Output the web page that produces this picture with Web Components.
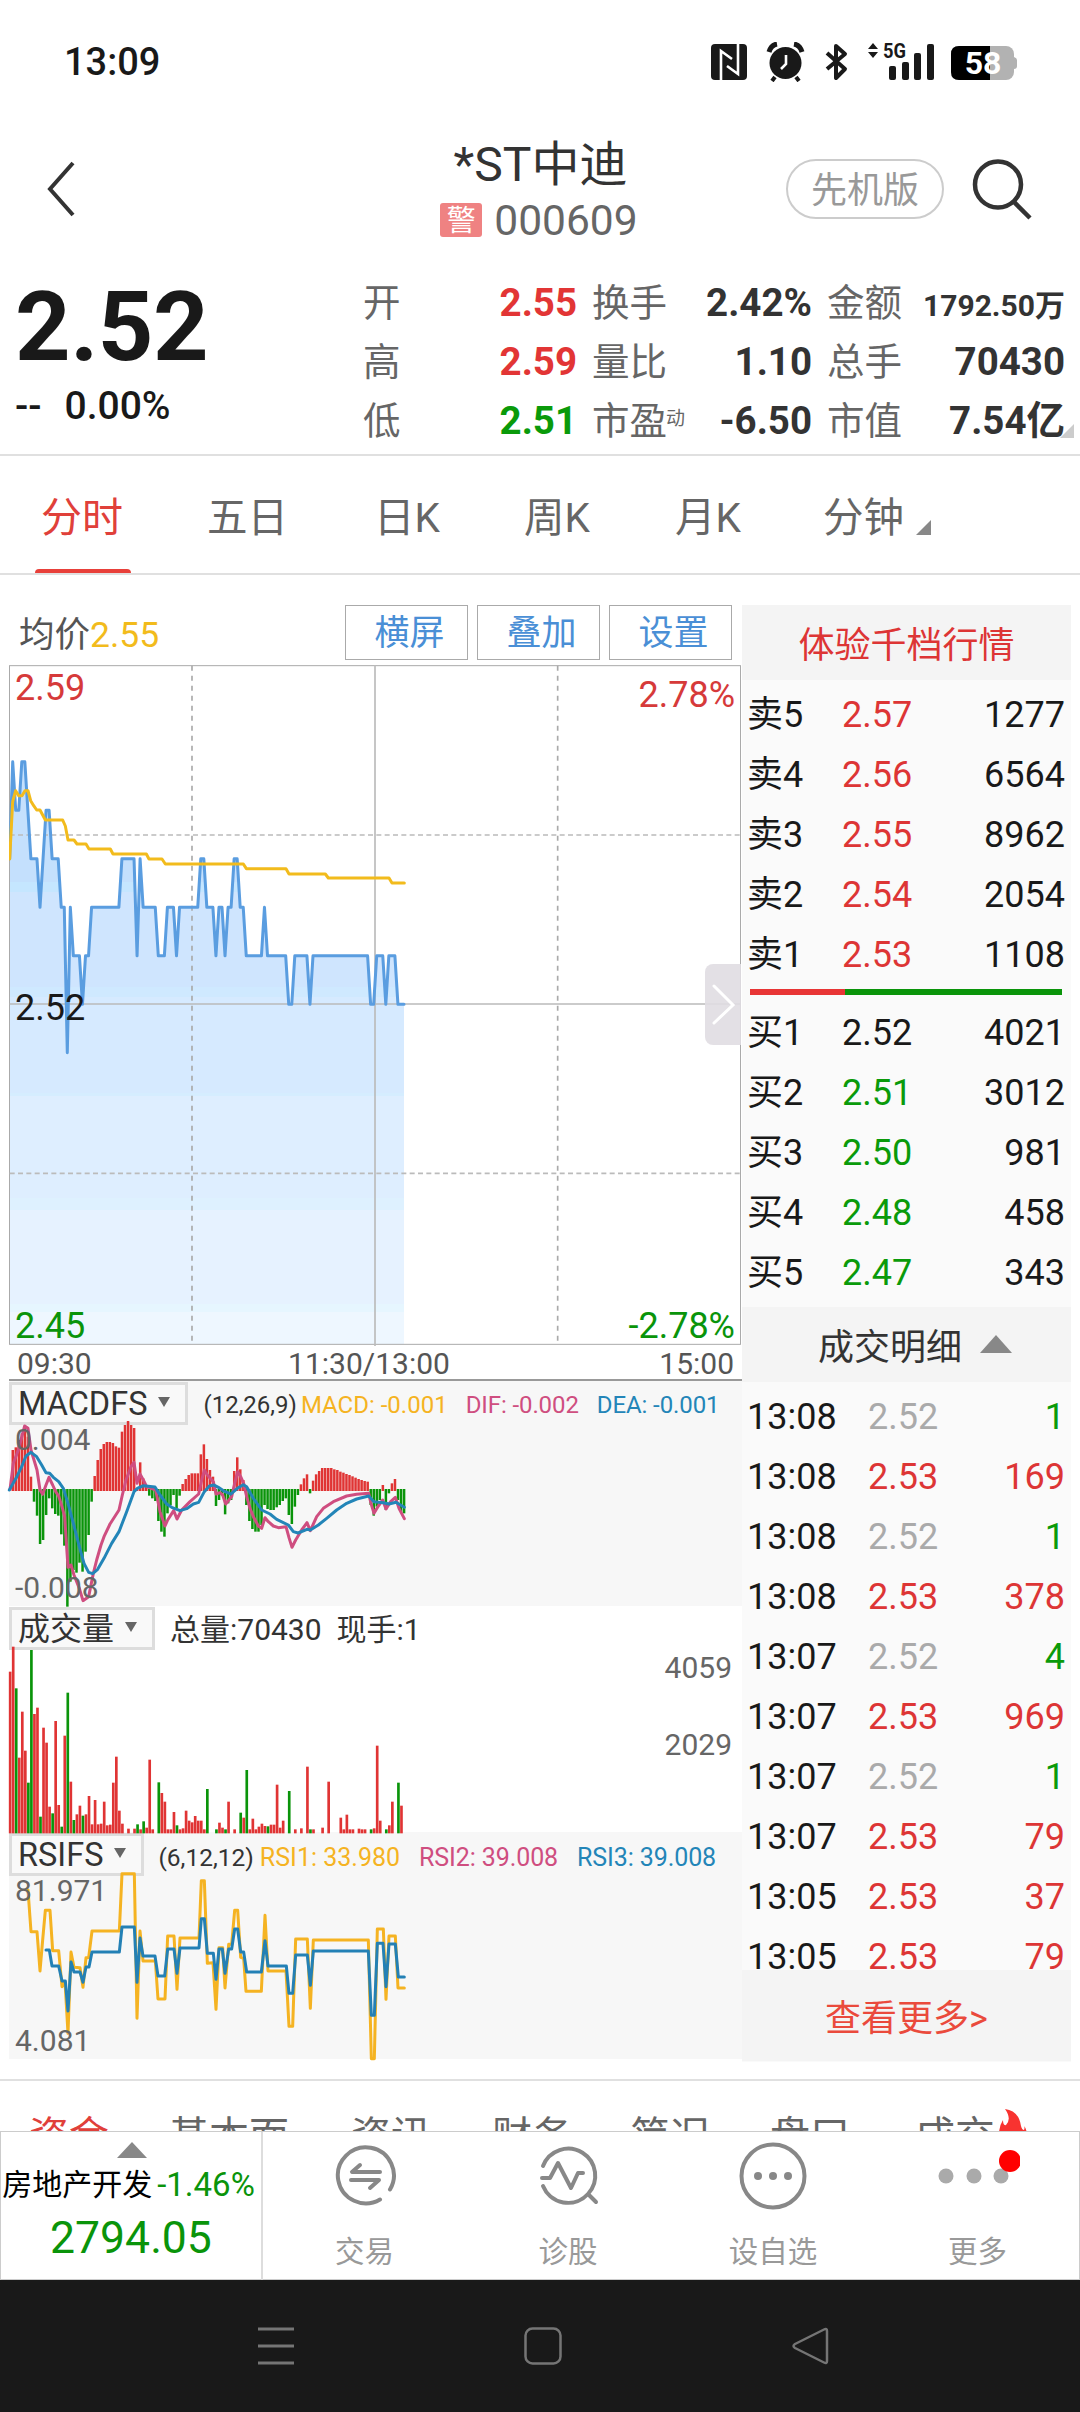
<!DOCTYPE html>
<html lang="zh-CN">
<head>
<meta charset="utf-8">
<title>*ST中迪 000609</title>
<style>
    :root {
        --up: #dd3535;
        --down: #0a940a;
        --line: #e0e0e0;
        --ink: #191919;
    }
    body {
        margin: 0;
        width: 1080px;
        height: 2412px;
        overflow: hidden;
        background: #fff;
        color: var(--ink);
        font-family: Roboto, "Noto Sans CJK SC", sans-serif;
    }
</style>
</head>
<body>
<stock-page></stock-page>

<script>
// registers an element whose shadow root is just styles + markup
function define(name, html, setup) {
    customElements.define(name, class extends HTMLElement {
        constructor() {
            super();
            this.attachShadow({ mode: 'open' });
        }
        connectedCallback() {
            this.shadowRoot.innerHTML = html;
            if (setup) setup(this, this.shadowRoot);
        }
    });
}

/* ---------- status bar ---------- */
define('status-bar', `
    <style>
        :host { display: flex; align-items: center; justify-content: space-between; height: 124px; padding: 0 60px 0 64px; box-sizing: border-box; }
        .clock { font-size: 38px; font-weight: 500; line-height: 125px; }
        svg { display: block; width: 310px; height: 40px; }
    </style>
    <span class="clock">13:09</span>
    <svg viewBox="710 42 310 40" fill="#191919">
        <rect x="711" y="44" width="36" height="36" rx="4"/>
        <path d="M721 80V51l11 8M738 44V74l-11 -8" fill="none" stroke="#fff" stroke-width="2.6"/>
        <circle cx="785.500" cy="63" r="16"/>
        <path d="M769 52q2-7 8-8M802 52q-2-7-8-8" fill="none" stroke="#191919" stroke-width="5"/>
        <path d="M775 77l-3 4M796 77l3 4" stroke="#191919" stroke-width="4"/>
        <path d="M786 55v9l-5 5" fill="none" stroke="#fff" stroke-width="2.600"/>
        <path d="M827 53l18 16-9 9V46l9 8-18 15" fill="none" stroke="#191919" stroke-width="4" stroke-linejoin="round"/>
        <path d="M868 49l5-6 5 6zM868 52l5 6 5-6z"/>
        <text x="883" y="58" font-size="21" font-weight="700" textLength="23" lengthAdjust="spacingAndGlyphs" font-family="Roboto">5G</text>
        <rect x="889" y="66" width="7" height="14" rx="2"/>
        <rect x="902" y="62" width="7" height="18" rx="2"/>
        <rect x="914" y="53" width="7" height="27" rx="2"/>
        <rect x="927" y="44" width="7" height="36" rx="2"/>
        <rect x="951" y="46" width="63" height="34" rx="8" fill="#b2b2b2"/>
        <path d="M1014 57q3 1 3 3v6q0 3-3 3z" fill="#b2b2b2"/>
        <path d="M990 46h-31q-8 0-8 8v18q0 8 8 8h31z" fill="#000"/>
        <text x="983" y="74" font-size="32" font-weight="700" fill="#fff" text-anchor="middle" font-family="Roboto">58</text>
    </svg>
`);

/* ---------- title row ---------- */
define('stock-header', `
    <style>
        :host { display: grid; grid-template-columns: 1fr auto 1fr; align-items: center; height: 130px; padding: 0 47px 0 45px; box-sizing: border-box; }
        .back, .find { display: block; }
        .titles { align-self: start; padding-top: 16px; text-align: center; color: #333; }
        .name { font-size: 48px; line-height: 50px; margin-left: 3px; }
        .code { display: flex; align-items: center; justify-content: center; gap: 12px; height: 60px; font-size: 42.500px; color: #666; }
        .badge { width: 42px; height: 34px; border-radius: 3px; background: #ef8282; color: #fff; font-size: 29px; line-height: 36px; text-align: center; }
        .tools { display: flex; justify-content: flex-end; align-items: center; gap: 28px; }
        .pill { box-sizing: border-box; width: 158px; height: 60px; border: 2px solid #ccc; border-radius: 30px; color: #999; font-size: 36px; line-height: 60px; text-align: center; }
    </style>
    <svg class="back" width="32" height="56" viewBox="0 0 32 56"><path d="M28 2L5 28 28 54" fill="none" stroke="#333" stroke-width="4"/></svg>
    <div class="titles">
        <div class="name"><slot name="name"></slot></div>
        <div class="code"><span class="badge">警</span><slot name="code"></slot></div>
    </div>
    <div class="tools">
        <span class="pill">先机版</span>
        <svg class="find" width="61" height="62" viewBox="972 158 61 62" fill="none" stroke="#333"><circle cx="998" cy="184.500" r="23" stroke-width="4.500"/><path d="M1014 202l16 16" stroke-width="4.500"/></svg>
    </div>
`);

/* ---------- last price and day figures ---------- */
define('stat-item', `
    <style>
        :host { display: flex; justify-content: space-between; align-items: flex-start; height: 59px; font-size: 38.500px; color: #666; }
        .label { display: flex; font-size: 37.500px; line-height: 63px; }
        sup { font-size: 19px; line-height: 57px; vertical-align: baseline; margin-left: -1px; }
        .value { font-weight: 700; color: #333; line-height: 62px; }
        :host([up]) .value { color: #e23535; }
        :host([down]) .value { color: #0a9a0a; }
        :host([small]) .value { font-size: 30px; line-height: 67px; }
    </style>
    <span class="label"><span class="t"></span></span>
    <span class="value"><slot></slot></span>
`, (el, root) => {
    root.querySelector('.t').textContent = el.getAttribute('label');
    if (el.hasAttribute('note')) {
        const sup = document.createElement('sup');
        sup.textContent = el.getAttribute('note');
        root.querySelector('.label').appendChild(sup);
    }
});

define('quote-board', `
    <style>
        :host { display: grid; grid-template-columns: 348px 702px; height: 202px; padding: 18px 15px 0; box-sizing: border-box; border-bottom: 2px solid var(--line); position: relative; }
        .last { font-size: 97px; font-weight: 700; line-height: 97px; margin-top: 7px; letter-spacing: -.5px; }
        .change { font-size: 39px; font-weight: 500; line-height: 61px; display: flex; gap: 23px; }
        .stats { display: grid; grid-template-columns: 214px 220px 238px; column-gap: 15px; align-content: start; }
        .corner { position: absolute; right: 6px; bottom: 16px; }
    </style>
    <div><div class="last">2.52</div><div class="change"><span>--</span><span>0.00%</span></div></div>
    <div class="stats">
        <stat-item label="开" up>2.55</stat-item><stat-item label="换手">2.42%</stat-item><stat-item label="金额" small>1792.50万</stat-item>
        <stat-item label="高" up>2.59</stat-item><stat-item label="量比">1.10</stat-item><stat-item label="总手">70430</stat-item>
        <stat-item label="低" down>2.51</stat-item><stat-item label="市盈" note="动">-6.50</stat-item><stat-item label="市值">7.54亿</stat-item>
    </div>
    <svg class="corner" width="14" height="14"><path d="M14 0V14H0z" fill="#ccc"/></svg>
`);

/* ---------- period tabs ---------- */
define('period-tabs', `
    <style>
        :host { display: grid; grid-template-rows: 100%; grid-template-columns: 166px 167px 150px 151px 148px auto; height: 119px; padding-left: 41px; box-sizing: border-box; border-bottom: 2px solid var(--line); color: #666; font-size: 41px; }
        span { line-height: 125px; font-size: 40.500px; }
        .on { color: #e0403a; font-size: 41px; width: 83px; position: relative; }
        .on::after { content: ""; position: absolute; left: -6px; bottom: 0; width: 96px; height: 4px; border-radius: 4px 4px 0 0; background: #e8403a; }
        svg { margin-left: 12px; vertical-align: -3px; }
    </style>
    <span class="on">分时</span><span>五日</span><span>日K</span><span>周K</span><span>月K</span>
    <span>分钟<svg width="15" height="15"><path d="M15 0V15H0z" fill="#888"/></svg></span>
`);

/* ---------- intraday chart ---------- */
// the plots use 3 units per pixel; one minute is 9.1 units wide
const X0 = 29, STEP = 9.1;

// "level*minutes": cents above 2.52
const PRICE = '3 5 4*2 5*2 4 3*3 2 3 4*2 3*3 2*2 -1 2 1*3 0 1*2 2*10 3*5 1 3 2*5 1*3 2*3 1 2*7 3*2 2*3 1 2*2 1 2*2 3*2 2*2 1*6 2 1*7 0*2 1*5 0 1*19 0*2 1*3 0 1*3 0*3';
const AVERAGE = '29,807 38,635 47,602 56,617 66,617 75,602 84,602 92,632 101,647 110,660 120,660 136,690 188,690 196,708 204,750 222,750 231,762 258,762 267,777 331,777 339,792 439,792 447,807 486,807 496,822 730,822 739,836 858,836 867,852 976,852 985,864 1167,864 1176,879 1213,879';

function pricePoints() {
    const levels = [];
    PRICE.split(' ').forEach(part => {
        const [level, count] = part.split('*').map(Number);
        for (let i = 0; i < (count || 1); i++) levels.push(level);
    });
    return levels.map((l, i) => (X0 + i * STEP).toFixed(1) + ',' + (1243 - l * 145.5)).join(' ');
}

define('minute-chart', `
    <style>
        :host { display: block; }
        .bar { display: flex; align-items: flex-start; gap: 9px; height: 60px; padding: 0 10px 0 10px; font-size: 36px; }
        .avg { flex: 1; line-height: 60px; color: #555; font-size: 35.500px; }
        .avg b { font-weight: 400; color: #f2bb1c; }
        .btn { box-sizing: border-box; width: 123px; height: 55px; border: 1.5px solid #aaa; padding-left: 6px; text-align: center; font-size: 35px; line-height: 55px; color: #4a8fd6; }
        .plot { display: grid; position: relative; height: 681px; }
        .plot > svg { display: block; grid-area: 1 / 1; width: 733px; height: 681px; }
        .labels { grid-area: 1 / 1; z-index: 1; display: flex; flex-direction: column; justify-content: space-between; padding: 1px 7px 0 6px; font-size: 36px; line-height: 44px; }
        .labels div { display: flex; justify-content: space-between; }
        .labels div:last-child { line-height: 40px; }
        .up { color: #d63a3a; } .down { color: var(--down); }
        .pct { padding-top: 7px; margin-bottom: -7px; }
        .fold { position: absolute; z-index: 2; right: 1px; top: 299px; width: 36px; height: 81px; border-radius: 8px 0 0 8px; background: rgba(224, 221, 226, .9); }
        .axis { display: grid; grid-template-columns: 1fr auto 1fr; height: 33px; padding: 0 8px 0 8px; border-bottom: 2px solid #999; font-size: 30px; line-height: 36px; color: #555; }
        .axis span:nth-child(2) { margin-left: -13px; }
        .axis span:last-child { text-align: right; }
    </style>
    <div class="bar">
        <span class="avg">均价<b>2.55</b></span>
        <span class="btn">横屏</span><span class="btn">叠加</span><span class="btn">设置</span>
    </div>
    <div class="plot">
        <svg viewBox="27 225 2199 2043">
            <defs><linearGradient id="sky" gradientUnits="userSpaceOnUse" x1="0" y1="515" x2="0" y2="2262"></linearGradient></defs>
            <polygon class="area" fill="url(#sky)"/>
            <g fill="none" stroke="#aaa">
                <rect x="28.500" y="227" width="2193" height="2036" stroke-width="3"/>
                <path d="M576 227V2262M1673 227V2262" stroke-width="5" stroke-dasharray="15 15"/>
                <path d="M29 735H2220M29 1750H2220" stroke="#bbb" stroke-width="5" stroke-dasharray="15 10"/>
                <path d="M29 1242H2220M1125 222V2268" stroke="#bbb" stroke-width="5"/>
            </g>
            <g fill="none" stroke-width="9" stroke-linejoin="round" stroke-linecap="round">
                <polyline class="price" stroke="#5a9de0"/>
                <polyline class="mean" stroke="#f2bb1c"/>
            </g>
        </svg>
        <div class="labels">
            <div><span class="up">2.59</span><span class="up pct">2.78%</span></div>
            <div><span>2.52</span></div>
            <div><span class="down">2.45</span><span class="down">-2.78%</span></div>
        </div>
        <svg class="fold" viewBox="0 0 36 81" style="width:36px;height:81px"><path d="M9 22L28 41 9 59" fill="none" stroke="#fff" stroke-width="3" stroke-linecap="round"/></svg>
    </div>
    <div class="axis"><span>09:30</span><span>11:30/13:00</span><span>15:00</span></div>
`, (el, root) => {
    const pts = pricePoints();
    root.querySelector('.price').setAttribute('points', pts);
    root.querySelector('.area').setAttribute('points', pts + ' 1212,2262 29,2262');
    root.querySelector('.mean').setAttribute('points', AVERAGE);
    // stepped fade: [top, bottom, colour], with a thin bluer strip between the bands
    const bands = [[515, 877, '#c4e0fd'], [877, 906, '#c5e6ff'], [906, 1192, '#cfe5fe'], [1192, 1220, '#cfe9ff'], [1220, 1508, '#d6eaff'], [1508, 1517, '#d5edff'],
        [1517, 1825, '#deeeff'], [1825, 1860, '#def1ff'], [1860, 2142, '#e6f2ff'], [2142, 2165, '#e6f6ff'], [2165, 2262, '#eef7ff']];
    const at = y => (y - 515) / 1747;
    root.getElementById('sky').innerHTML = bands.map(([top, bottom, c]) =>
        `<stop offset="${at(top)}" stop-color="${c}"/><stop offset="${at(bottom)}" stop-color="${c}"/>`).join('');
});

/* ---------- indicator panels ---------- */
define('indicator-panel', `
    <style>
        :host { display: grid; grid-template-rows: 100%; background: var(--panel, #f7f7f7); color: #333; }
        .text, .plot { grid-area: 1 / 1; min-width: 0; }
        .text { display: flex; flex-direction: column; }
        .head { display: flex; align-items: flex-start; height: 46px; }
        .pick { box-sizing: border-box; height: 43px; margin-top: 1px; padding: 0 15px 0 6px; border: 3px solid #ddd; display: flex; align-items: center; gap: 11px; font-size: var(--pick, 32.5px); line-height: 38px; white-space: pre; background: #f9f9f9; }
        .pick svg { margin-top: -4px; }
        .legend { display: flex; white-space: pre; font-size: var(--legend, 24px); line-height: 48px; }
        .body { flex: 1; display: flex; flex-direction: column; justify-content: space-between; padding: 3px 10px 8px 6px; font-size: 30px; line-height: 20px; color: #666; z-index: 1; }
        .plot { display: block; width: 733px; height: 100%; overflow: visible; z-index: 0; }
    </style>
    <div class="text">
        <div class="head">
            <span class="pick"><slot name="pick"></slot><svg width="12" height="10"><path d="M0 0H12L6 10z" fill="#666"/></svg></span>
            <div class="legend"><slot name="legend"></slot></div>
        </div>
        <div class="body"><slot name="scale"></slot></div>
    </div>
    <svg class="plot" preserveAspectRatio="none"></svg>
`, (el, root) => {
    const svg = root.querySelector('.plot');
    svg.setAttribute('viewBox', el.getAttribute('view'));
    svg.innerHTML = PLOTS[el.getAttribute('plot')]();
});

const RED = '#e03434', GREEN = '#0a940a';

const MACD = [0, 120, 128, 150, 170, 190, 160, 40, -35, -77, -162, -150, -75, -25, -55, -72, -77, -133, -167, -350, -275, -240, -248, -218, -245, -185, -135, -35,
    42, 90, 123, 138, 144, 144, 141, 131, 127, 175, 195, 207, 195, 186, 3, 83, 35, 10, -17, -25, -33, -93, -125, -140, -70, -45, -15, -55, -17,
    18, 33, 45, 50, 50, 50, 107, 137, 93, 60, 40, -48, -30, -15, -73, -40, -30, 57, 98, 62, 30, -45, -93, -117, -125, -125, -105, -45, -57, -60, -60, -52, -45, -33, -25,
    -75, -102, -50, -15, 17, 35, 47, -10, 28, 47, 57, 66, 66, 66, 66, 62, 60, 55, 52, 48, 45, 41, 37, 33, 30, 27, 25, -45, -77, -50, -30, 15, -60, -10, 20, 33, -30, -65, -70];

// negative = green bar
const VOLUME = [485, 560, -435, 227, 365, 248, -152, -550, 358, 377, -50, 317, 272, 80, -60, 337, 85, -20, 293, -422, 155, -40, 57, 83, -53, 57, 112, 27, 100, 27, 29, 95, 24, 26, 152, 230, 68, 29,
    0, 14, 0, 14, -27, 12, -36, 17, 221, 12, 0, -153, 121, 95, 12, 12, 64, -24, 12, 15, 68, 38, 33, 52, 38, 38, 12, -133, 0, 0, -12, 32, 17, -12, 95, 0, 12, 0, -62, 47, -190, 12, 44, 12, 20, 29, 22, -21, 26, 26, 146, 17, 38,
    0, -127, 0, 12, 0, 15, 0, 200, -12, 12, 0, 0, 17, 0, 155, 0, 0, 0, 47, 12, 56, 12, 12, 0, 14, 12, 12, 0, -12, 15, 263, 38, 0, -12, 24, 95, 0, -152, 83];

const DIF = '30,358 40,280 55,240 74,168 84,175 93,240 102,270 111,300 120,360 128,373 138,345 147,322 158,345 167,365 176,378 186,410 194,440 204,592 213,585 222,615 238,655 249,692 266,680 280,610 290,570 303,525 312,500 330,462 357,420 367,375 378,330 393,290 402,277 411,340 420,312 430,330 440,350 467,360 480,425 495,468 503,450 521,422 531,447 545,420 570,395 596,372 604,335 613,300 622,315 640,335 648,372 660,368 668,375 677,402 695,380 704,340 713,305 722,320 731,340 740,380 750,415 760,440 775,468 785,475 795,443 805,455 820,468 835,473 858,470 867,503 876,532 887,510 905,480 921,458 931,482 950,440 970,415 1000,395 1040,378 1070,373 1106,370 1113,400 1122,430 1135,408 1148,390 1158,417 1172,395 1186,382 1197,415 1213,446';
const DEA = '28,360 48,325 65,290 78,258 93,247 110,260 125,285 138,308 149,310 160,322 176,335 190,355 204,400 220,460 238,530 252,580 266,607 278,611 293,598 312,565 335,520 357,485 380,425 402,365 412,355 430,347 465,351 480,375 500,402 515,412 540,422 560,416 580,402 596,397 613,365 628,348 642,345 655,352 675,365 693,372 712,355 730,344 740,350 760,385 785,420 810,432 830,448 865,465 880,485 894,489 921,478 931,480 955,465 980,445 1010,420 1040,400 1070,387 1106,378 1122,395 1150,398 1167,402 1188,397 1213,412';
const RSI_FAST = '84,180 93,305 111,305 120,423 128,330 136,241 150,241 158,362 176,362 186,470 195,455 204,610 213,366 222,412 240,413 249,472 258,383 266,383 276,303 358,303 366,131 403,131 411,565 420,303 429,393 466,393 474,507 495,507 503,318 522,318 531,478 540,324 597,324 604,152 613,152 622,400 639,398 648,538 657,353 668,353 675,474 686,343 695,343 704,241 713,241 722,382 731,385 738,484 784,484 795,256 804,423 858,423 867,589 878,589 887,327 922,327 931,535 940,330 1105,330 1114,686 1123,686 1132,297 1150,297 1158,508 1167,318 1186,318 1194,474 1213,474';
const RSI_SLOW = '138,360 148,360 156,408 176,408 186,453 196,453 204,543 213,396 222,426 240,426 249,457 258,411 267,411 276,366 358,366 366,291 403,291 411,457 420,324 429,378 465,378 474,438 494,438 503,357 522,357 531,430 540,354 597,354 604,266 613,266 622,370 640,370 648,448 657,357 667,357 675,430 686,357 695,357 704,297 713,297 722,366 731,366 740,426 784,426 795,332 804,408 859,408 867,490 878,490 887,375 922,375 931,466 940,363 1105,363 1114,556 1123,556 1132,340 1149,340 1158,470 1167,342 1186,342 1195,441 1213,441';

function line(points, color) {
    return `<polyline points="${points}" fill="none" stroke="${color}" stroke-width="9" stroke-linejoin="round" stroke-linecap="round"/>`;
}

const PLOTS = {
    macd() {
        const bars = MACD.map((h, i) => h === 0 ? '' :
            `<rect x="${X0 + i * STEP - 3.5}" y="${h > 0 ? 363 - h - 3 : 357}" width="7.500" height="${Math.abs(h) + 3}" fill="${h > 0 ? RED : GREEN}"/>`).join('');
        return bars + line(DIF, '#cf4e80') + line(DEA, '#2385b8');
    },
    volume() {
        return VOLUME.map((h, i) => {
            const tall = Math.abs(h);
            return `<rect x="${X0 + i * STEP - 2.5}" y="${700 - tall}" width="8" height="${tall}" fill="${h > 0 ? RED : GREEN}"/>`;
        }).join('');
    },
    rsi() {
        return line(RSI_FAST, '#f5b322') + line(RSI_SLOW, '#2380b5');
    }
};

/* ---------- order book and trades ---------- */
define('order-row', `
    <style>
        :host { display: grid; grid-template-columns: var(--cols, 95px 120px 1fr); height: 60px; line-height: 61px; padding: 0 6px 0 5px; font-size: 36px; }
        .price { color: var(--ink); }
        .vol { text-align: right; }
        .up { color: var(--up); } .down { color: #0a9a0a; } .flat { color: #aaa; }
    </style>
    <span class="name"></span><span class="price"></span><span class="vol"></span>
`, (el, root) => {
    const [name, price, vol, priceTone, volTone] = el.getAttribute('row').split(' ');
    root.querySelector('.name').textContent = name;
    root.querySelector('.price').textContent = price;
    root.querySelector('.vol').textContent = vol;
    if (priceTone) root.querySelector('.price').classList.add(priceTone);
    if (volTone) root.querySelector('.vol').classList.add(volTone);
});

const SELL = ['卖5 2.57 1277 up', '卖4 2.56 6564 up', '卖3 2.55 8962 up', '卖2 2.54 2054 up', '卖1 2.53 1108 up'];
const BUY = ['买1 2.52 4021', '买2 2.51 3012 down', '买3 2.50 981 down', '买4 2.48 458 down', '买5 2.47 343 down'];
const TRADES = ['13:08 2.52 1 flat down', '13:08 2.53 169 up up', '13:08 2.52 1 flat down', '13:08 2.53 378 up up', '13:07 2.52 4 flat down',
    '13:07 2.53 969 up up', '13:07 2.52 1 flat down', '13:07 2.53 79 up up', '13:05 2.53 37 up up', '13:05 2.53 79 up up'];
const rows = list => list.map(r => `<order-row row="${r}"></order-row>`).join('');

define('order-side', `
    <style>
        :host { display: flex; flex-direction: column; background: #fafafa; font-size: 36px; }
        .bar { background: #f4f4f4; text-align: center; white-space: pre; }
        .deep { height: 75px; line-height: 82px; font-size: 36px; color: var(--up); }
        .sell { padding-top: 5px; }
        .ratio { display: flex; height: 6px; margin: 4px 9px 8px 8px; }
        .ratio i { width: 95px; background: #e83535; }
        .ratio b { flex: 1; background: #0a940a; }
        .detail { display: flex; justify-content: center; height: 75px; margin-top: 4px; padding-left: 17px; gap: 18px; font-size: 36px; line-height: 83px; color: #333; }
        .detail svg { margin-top: 28px; }
        .trades { --cols: 121px 100px 1fr; height: 583px; padding-top: 5px; overflow: hidden; }
        .more { height: 91px; line-height: 98px; color: #ea4a3c; font-size: 36px; }
    </style>
    <div class="bar deep">体验千档行情</div>
    <div class="sell">${rows(SELL)}</div>
    <div class="ratio"><i></i><b></b></div>
    <div class="buy">${rows(BUY)}</div>
    <div class="bar detail">成交明细<svg width="32" height="18"><path d="M0 18L16 0 32 18z" fill="#888"/></svg></div>
    <div class="trades">${rows(TRADES)}</div>
    <div class="bar more">查看更多&gt;</div>
`);

/* ---------- lower tabs, cut by the dock ---------- */
define('info-tabs', `
    <style>
        :host { display: grid; grid-template-columns: 140px 182px 141px 138px 140px 145px auto; box-sizing: border-box; height: 52px; margin-top: 17px; padding: 0 0 0 29px; border-top: 2px solid var(--line); overflow: hidden; font-size: 40px; line-height: 112px; color: #666; white-space: nowrap; }
        .on { color: #e0403a; }
        .hot { display: flex; align-items: flex-start; }
        svg { margin-top: 28px; margin-left: 4px; }
    </style>
    <span class="on">资金</span><span>基本面</span><span>资讯</span><span>财务</span><span>简况</span><span>盘口</span>
    <span class="hot">成交<svg width="30" height="38" viewBox="0 0 30 38"><path d="M6 0Q20 2 22 17Q23 21 25 21Q26 19 25 17Q29 21 27 30Q24 38 14 38Q1 38 0 25Q0 17 4 11Q4 17 7 16Q13 10 6 0z" fill="#f83330"/></svg></span>
`);

/* ---------- dock ---------- */
define('dock-item', `
    <style>
        :host { display: flex; flex-direction: column; align-items: center; color: #999; font-size: 29.500px; }
        .icon { height: 88px; display: flex; align-items: center; }
        .label { line-height: 64px; }
    </style>
    <div class="icon"><slot></slot></div>
    <div class="label"><slot name="label"></slot></div>
`);

define('bottom-dock', `
    <style>
        :host { display: grid; grid-template-columns: 262px 203px 204px 206px 203px; box-sizing: border-box; height: 149px; border: 1.500px solid #ccc; }
        .index { display: flex; flex-direction: column; align-items: center; box-sizing: border-box; border-right: 2px solid #ddd; white-space: nowrap; }
        .index svg { display: block; margin-top: 10px; margin-left: 2px; }
        .board { display: flex; gap: 5px; margin-left: -5px; font-size: 30px; line-height: 54px; height: 54px; color: #000; }
        .board b { font-weight: 400; font-size: 33px; }
        .board b, .points { color: #0a940a; }
        .points { font-size: 44.500px; line-height: 52px; }
        dock-item svg { display: block; }
    </style>
    <div class="index">
        <svg width="30" height="16"><path d="M0 16L15 0 30 16z" fill="#888"/></svg>
        <div class="board"><span>房地产开发</span><b>-1.46%</b></div>
        <div class="points">2794.05</div>
    </div>
    <dock-item>
        <svg width="66" height="66" viewBox="-33 -33 66 66" fill="none" stroke="#888" stroke-width="4" stroke-linecap="round">
            <path d="M15 23.500A28 28 0 1 1 25 13.500"/>
            <path d="M-5 -11L-13 -4H15M-14 4H14L5 12" stroke-linejoin="round"/>
        </svg><span slot="label">交易</span>
    </dock-item>
    <dock-item>
        <svg width="66" height="66" viewBox="-33 -33 66 66" fill="none" stroke="#888" stroke-width="4" stroke-linecap="round" stroke-linejoin="round">
            <path d="M-25 -10A27 27 0 1 1 20 18M-25 10A27 27 0 0 0 20 18L28 26"/>
            <path d="M-26 2H-18L-10 -13 3 12 10 -3H15"/>
        </svg><span slot="label">诊股</span>
    </dock-item>
    <dock-item>
        <svg width="68" height="68" viewBox="-34 -34 68 68"><circle r="31.500" fill="none" stroke="#888" stroke-width="4"/><g fill="#888"><circle cx="-15" r="4"/><circle r="4"/><circle cx="15" r="4"/></g></svg>
        <span slot="label">设自选</span>
    </dock-item>
    <dock-item>
        <svg width="84" height="60" viewBox="-42 -30 84 60"><g fill="#aaa"><circle cx="-32" r="7.500"/><circle cx="-4" r="7.500"/><circle cx="23" r="7.500"/></g><circle cx="32" cy="-15" r="11" fill="#f00"/></svg>
        <span slot="label">更多</span>
    </dock-item>
`);

define('system-nav', `
    <style>
        :host { display: flex; justify-content: space-between; align-items: center; flex: 1; background: #191919; padding: 0 251px 0 257px; }
        svg { display: block; }
    </style>
    <svg width="38" height="38" stroke="#757575" stroke-width="3"><path d="M1 2H37M1 19H37M1 36H37"/></svg>
    <svg width="38" height="38" fill="none" stroke="#757575" stroke-width="2.500"><rect x="1.500" y="1.500" width="35" height="35" rx="7"/></svg>
    <svg width="38" height="38" fill="none" stroke="#757575" stroke-width="2.500" stroke-linejoin="round"><path d="M33 2.500Q36 1 36 4V34Q36 37 33 35.500L4 21Q1 19 4 17z"/></svg>
`);

define('stock-page', `
    <style>
        :host { display: flex; flex-direction: column; height: 2412px; }
        main { display: grid; grid-template-columns: 733px 329px; height: 1457px; padding: 30px 9px 0; align-items: start; }
        order-side { height: 1457px; }
        indicator-panel { height: 225px; }
        .vol { --panel: #fff; --pick: 32px; height: 226px; }
        .rsi { --legend: 25px; height: 227px; }
        .y { color: #f5b322; } .p { color: #cf4e80; } .b { color: #2385b8; }
        .macd .par { margin-left: 15px; padding-right: 4px; }
        .rsi .par { margin-left: 14px; padding-right: 6px; font-size: 24.500px; }
        .macd .y, .macd .p { margin-right: 18px; }
        .rsi .y, .rsi .p { margin-right: 19px; }
        .rsi [slot=legend] { line-height: 51px; }
        .p, .b { letter-spacing: -.1px; }
        .total { margin-left: 15px; font-size: 30px; line-height: 47px; }
        .at { text-align: right; margin-top: 3px; }
        .at + .at { margin-bottom: 69px; }
    </style>
    <status-bar></status-bar>
    <stock-header><span slot="name">*ST中迪</span><span slot="code">000609</span></stock-header>
    <quote-board></quote-board>
    <period-tabs></period-tabs>
    <main>
        <div>
            <minute-chart></minute-chart>
            <indicator-panel class="macd" plot="macd" view="27 33 2199 675">
                <span slot="pick">MACDFS</span>
                <span slot="legend" class="par">(12,26,9)</span><span slot="legend" class="y">MACD: -0.001</span><span slot="legend" class="p">DIF: -0.002</span><span slot="legend" class="b">DEA: -0.001</span>
                <span slot="scale">0.004</span><span slot="scale">-0.008</span>
            </indicator-panel>
            <indicator-panel class="vol" plot="volume" view="27 18 2199 678">
                <span slot="pick">成交量</span>
                <span slot="legend" class="total">总量:70430  现手:1</span>
                <span slot="scale" class="at">4059</span><span slot="scale" class="at">2029</span>
            </indicator-panel>
            <indicator-panel class="rsi" plot="rsi" view="27 6 2199 681">
                <span slot="pick">RSIFS</span>
                <span slot="legend" class="par">(6,12,12)</span><span slot="legend" class="y">RSI1: 33.980</span><span slot="legend" class="p">RSI2: 39.008</span><span slot="legend" class="b">RSI3: 39.008</span>
                <span slot="scale">81.971</span><span slot="scale">4.081</span>
            </indicator-panel>
        </div>
        <order-side></order-side>
    </main>
    <info-tabs></info-tabs>
    <bottom-dock></bottom-dock>
    <system-nav></system-nav>
`);
</script>
</body>
</html>
